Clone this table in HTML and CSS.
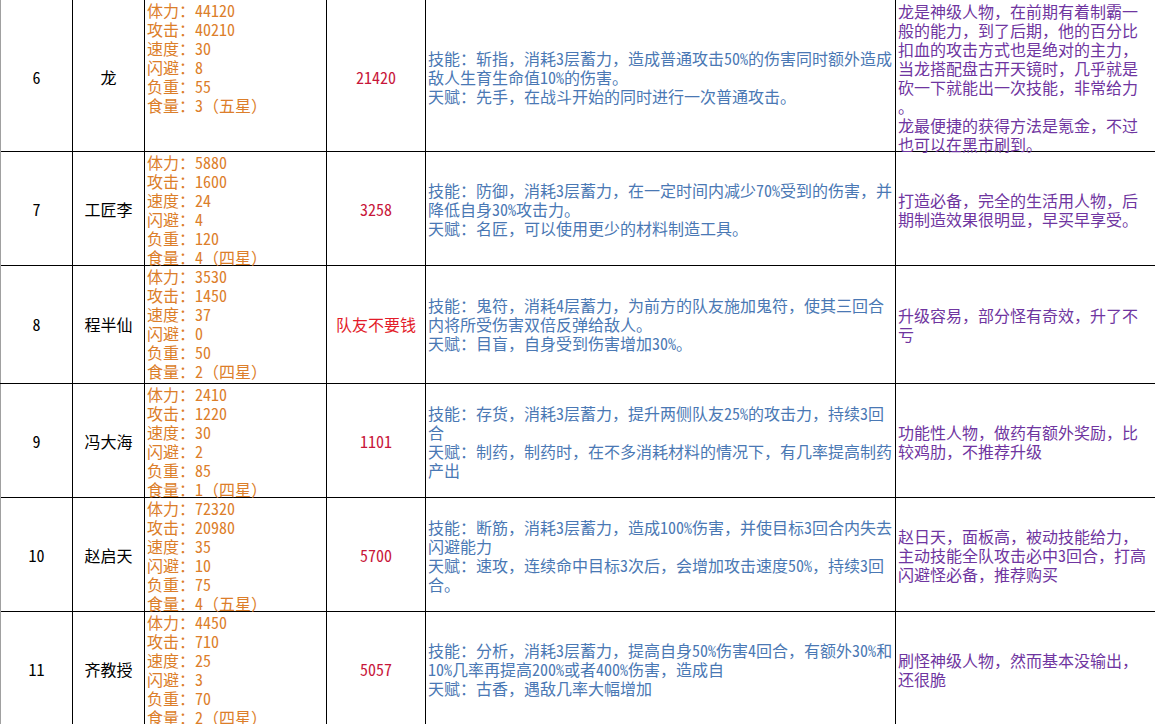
FILE: index.html
```html
<!DOCTYPE html>
<html lang="zh-CN">
<head>
<meta charset="utf-8">
<title>人物表</title>
<link rel="stylesheet" href="styles.css">
</head>
<body>
<div class="sheet">
  <div class="row h152">
    <div class="cell num first">6</div>
    <div class="cell name">龙</div>
    <div class="cell stats"><div class="txt">体力：<span class="h">44120</span><br>攻击：<span class="h">40210</span><br>速度：<span class="h">30</span><br>闪避：<span class="h">8</span><br>负重：<span class="h">55</span><br>食量：<span class="h">3</span>（五星）</div></div>
    <div class="cell price">21420</div>
    <div class="cell skill"><div class="txt">技能：斩指，消耗<span class="h">3</span>层蓄力，造成普通攻击<span class="h">50%</span>的伤害同时额外造成<br>敌人生育生命值<span class="h">10%</span>的伤害。<br>天赋：先手，在战斗开始的同时进行一次普通攻击。</div></div>
    <div class="cell note top"><div class="txt">龙是神级人物，在前期有着制霸一<br>般的能力，到了后期，他的百分比<br>扣血的攻击方式也是绝对的主力，<br>当龙搭配盘古开天镜时，几乎就是<br>砍一下就能出一次技能，非常给力<br>。<br>龙最便捷的获得方法是氪金，不过<br>也可以在黑市刷到。</div></div>
  </div>
  <div class="row h114">
    <div class="cell num first">7</div>
    <div class="cell name">工匠李</div>
    <div class="cell stats"><div class="txt">体力：<span class="h">5880</span><br>攻击：<span class="h">1600</span><br>速度：<span class="h">24</span><br>闪避：<span class="h">4</span><br>负重：<span class="h">120</span><br>食量：<span class="h">4</span>（四星）</div></div>
    <div class="cell price">3258</div>
    <div class="cell skill"><div class="txt">技能：防御，消耗<span class="h">3</span>层蓄力，在一定时间内减少<span class="h">70%</span>受到的伤害，并<br>降低自身<span class="h">30%</span>攻击力。<br>天赋：名匠，可以使用更少的材料制造工具。</div></div>
    <div class="cell note"><div class="txt">打造必备，完全的生活用人物，后<br>期制造效果很明显，早买早享受。</div></div>
  </div>
  <div class="row h118">
    <div class="cell num first">8</div>
    <div class="cell name">程半仙</div>
    <div class="cell stats"><div class="txt">体力：<span class="h">3530</span><br>攻击：<span class="h">1450</span><br>速度：<span class="h">37</span><br>闪避：<span class="h">0</span><br>负重：<span class="h">50</span><br>食量：<span class="h">2</span>（四星）</div></div>
    <div class="cell price free">队友不要钱</div>
    <div class="cell skill"><div class="txt">技能：鬼符，消耗<span class="h">4</span>层蓄力，为前方的队友施加鬼符，使其三回合<br>内将所受伤害双倍反弹给敌人。<br>天赋：目盲，自身受到伤害增加<span class="h">30%</span>。</div></div>
    <div class="cell note"><div class="txt">升级容易，部分怪有奇效，升了不<br>亏</div></div>
  </div>
  <div class="row h114">
    <div class="cell num first">9</div>
    <div class="cell name">冯大海</div>
    <div class="cell stats"><div class="txt">体力：<span class="h">2410</span><br>攻击：<span class="h">1220</span><br>速度：<span class="h">30</span><br>闪避：<span class="h">2</span><br>负重：<span class="h">85</span><br>食量：<span class="h">1</span>（四星）</div></div>
    <div class="cell price">1101</div>
    <div class="cell skill"><div class="txt">技能：存货，消耗<span class="h">3</span>层蓄力，提升两侧队友<span class="h">25%</span>的攻击力，持续<span class="h">3</span>回<br>合<br>天赋：制药，制药时，在不多消耗材料的情况下，有几率提高制药<br>产出</div></div>
    <div class="cell note"><div class="txt">功能性人物，做药有额外奖励，比<br>较鸡肋，不推荐升级</div></div>
  </div>
  <div class="row h114">
    <div class="cell num first">10</div>
    <div class="cell name">赵启天</div>
    <div class="cell stats"><div class="txt">体力：<span class="h">72320</span><br>攻击：<span class="h">20980</span><br>速度：<span class="h">35</span><br>闪避：<span class="h">10</span><br>负重：<span class="h">75</span><br>食量：<span class="h">4</span>（五星）</div></div>
    <div class="cell price">5700</div>
    <div class="cell skill"><div class="txt">技能：断筋，消耗<span class="h">3</span>层蓄力，造成<span class="h">100%</span>伤害，并使目标<span class="h">3</span>回合内失去<br>闪避能力<br>天赋：速攻，连续命中目标<span class="h">3</span>次后，会增加攻击速度<span class="h">50%</span>，持续<span class="h">3</span>回<br>合。</div></div>
    <div class="cell note"><div class="txt">赵日天，面板高，被动技能给力，<br>主动技能全队攻击必中<span class="h">3</span>回合，打高<br>闪避怪必备，推荐购买</div></div>
  </div>
  <div class="row h116">
    <div class="cell num first">11</div>
    <div class="cell name">齐教授</div>
    <div class="cell stats"><div class="txt">体力：<span class="h">4450</span><br>攻击：<span class="h">710</span><br>速度：<span class="h">25</span><br>闪避：<span class="h">3</span><br>负重：<span class="h">70</span><br>食量：<span class="h">2</span>（四星）</div></div>
    <div class="cell price">5057</div>
    <div class="cell skill"><div class="txt">技能：分析，消耗<span class="h">3</span>层蓄力，提高自身<span class="h">50%</span>伤害<span class="h">4</span>回合，有额外<span class="h">30%</span>和<br><span class="h">10%</span>几率再提高<span class="h">200%</span>或者<span class="h">400%</span>伤害，造成自<br>天赋：古香，遇敌几率大幅增加</div></div>
    <div class="cell note"><div class="txt">刷怪神级人物，然而基本没输出，<br>还很脆</div></div>
  </div>
</div>
</body>
</html>
```

FILE: styles.css
```css
html, body {
  margin: 0;
  padding: 0;
  background: #ffffff;
  overflow: hidden;
}
body {
  font-family: "Noto Sans CJK SC", "Noto Sans", sans-serif;
  font-size: 16px;
  line-height: 19px;
  color: #000000;
}
.h {
  font-feature-settings: "hwid" 1;
}
.num, .price {
  font-feature-settings: "hwid" 1;
}
.sheet {
  width: 1155px;
}
.row {
  display: grid;
  grid-template-columns: 72px 72px 182px 99px 470px 260px;
  box-sizing: border-box;
  border-bottom: 1px solid #000000;
}
.h152 { height: 152px; }
.h114 { height: 114px; }
.h118 { height: 118px; }
.h116 { height: 116px; }
.cell {
  box-sizing: border-box;
  border-left: 1px solid #000000;
  display: flex;
  flex-direction: column;
  justify-content: center;
  white-space: nowrap;
  min-width: 0;
}
.cell.first {
  border-left-color: #a0a0a0;
}
.num, .name, .price {
  align-items: center;
  text-align: center;
}
.stats {
  justify-content: flex-start;
  padding: 1px 0 0 2px;
  color: #dc7e2a;
}
.price {
  color: #c8163a;
}
.price.free {
  color: #e31c2a;
}
.skill {
  padding-left: 2px;
  color: #4a78b4;
}
.note {
  padding-left: 2px;
  color: #6f35a0;
}
.note.top {
  justify-content: flex-start;
  padding-top: 2px;
}
```
